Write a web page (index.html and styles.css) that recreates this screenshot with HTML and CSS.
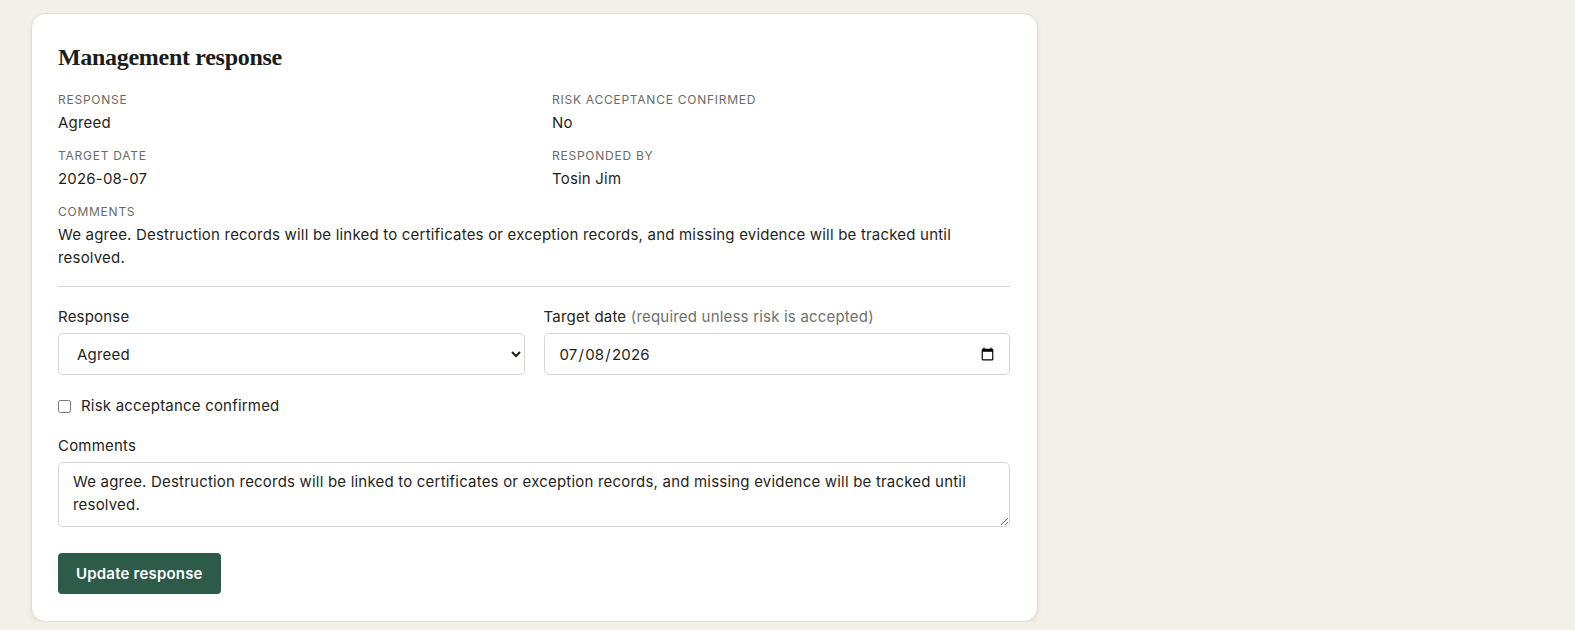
FILE: index.html
```html
<!DOCTYPE html>
<html lang="en">

<head>
    <meta charset="UTF-8">
    <meta name="viewport" content="width=device-width, initial-scale=1.0">
    <title>Management response</title>
    <link rel="stylesheet" href="styles.css">
</head>

<body>
    <div class="card">
        <h2>Management response</h2>

        <div class="details">
            <div class="item">
                <div class="label">Response</div>
                <div class="value">Agreed</div>
            </div>
            <div class="item">
                <div class="label">Risk acceptance confirmed</div>
                <div class="value">No</div>
            </div>
            <div class="item">
                <div class="label">Target date</div>
                <div class="value">2026-08-07</div>
            </div>
            <div class="item">
                <div class="label">Responded by</div>
                <div class="value">Tosin Jim</div>
            </div>
            <div class="item wide">
                <div class="label">Comments</div>
                <div class="value">We agree. Destruction records will be linked to certificates or exception records, and missing evidence will be tracked until resolved.</div>
            </div>
        </div>

        <hr>

        <form class="response-form">
            <div class="row">
                <div class="field">
                    <label for="response">Response</label>
                    <select id="response">
                        <option>Agreed</option>
                        <option>Partially agreed</option>
                        <option>Not agreed</option>
                    </select>
                </div>
                <div class="field">
                    <label for="targetDate">Target date <span class="hint">(required unless risk is accepted)</span></label>
                    <input type="date" id="targetDate" value="2026-07-08">
                </div>
            </div>

            <label class="check">
                <input type="checkbox" id="riskAccepted"> Risk acceptance confirmed
            </label>

            <div class="field">
                <label for="comments">Comments</label>
                <textarea id="comments" rows="2">We agree. Destruction records will be linked to certificates or exception records, and missing evidence will be tracked until resolved.</textarea>
            </div>

            <div class="actions">
                <button type="button" class="btn">Update response</button>
            </div>
        </form>
    </div>
</body>

</html>
```

FILE: styles.css
```css
body {
    margin: 0;
    background-color: #f3f0e9;
    font-family: Inter, "Noto Sans", sans-serif;
    font-size: 15px;
    letter-spacing: 0.2px;
    color: #1f1f1c;
}

.card {
    width: 952px;
    margin: 13px 0 0 31px;
    padding: 26px 27px 27px 26px;
    background-color: #ffffff;
    border: 1px solid #e2ddd2;
    border-radius: 14px;
    box-shadow: 0 2px 4px rgba(60, 50, 30, 0.08);
}

h2 {
    margin: 0 0 17px 0;
    font-family: "Liberation Serif", serif;
    font-size: 24px;
    line-height: 34px;
    font-weight: bold;
    letter-spacing: -0.3px;
    color: #1c1c1a;
}

.details {
    display: grid;
    grid-template-columns: 1fr 1fr;
    column-gap: 36px;
    row-gap: 13px;
}

.details .wide {
    grid-column: 1 / 3;
}

.label {
    font-size: 12px;
    letter-spacing: 0.75px;
    text-transform: uppercase;
    color: #6b6b66;
    line-height: 18px;
    margin-bottom: 2px;
}

.value {
    line-height: 23px;
}

hr {
    border: none;
    border-top: 1px solid #dcd7cb;
    margin: 17px 0 20px 0;
}

.response-form {
    display: flex;
    flex-direction: column;
    gap: 20px;
}

.row {
    display: grid;
    grid-template-columns: 1fr 1fr;
    column-gap: 19px;
    margin-bottom: 1px;
}

.field {
    display: flex;
    flex-direction: column;
    gap: 6px;
}

.field label {
    line-height: 20px;
    color: #252522;
}

.hint {
    color: #6e716c;
}

select,
input[type=date],
textarea {
    font-family: inherit;
    font-size: 15px;
    letter-spacing: inherit;
    color: #1f1f1c;
    background-color: #ffffff;
    border: 1px solid #d6d6d3;
    border-radius: 5px;
    box-sizing: border-box;
    width: 100%;
}

select,
input[type=date] {
    height: 42px;
    padding: 0 12px 0 14px;
}

textarea {
    height: 65px;
    padding: 7px 14px;
    line-height: 23px;
    resize: vertical;
}

.check {
    display: flex;
    align-items: center;
    gap: 10px;
    line-height: 20px;
    color: #252522;
}

.check input {
    margin: 0;
    width: 13px;
    height: 13px;
}

.actions {
    margin-top: 6px;
}

.btn {
    height: 41px;
    padding: 0 18px;
    background-color: #2e5a4a;
    color: #ffffff;
    border: none;
    border-radius: 4px;
    font-family: inherit;
    font-size: 15px;
    font-weight: 600;
    letter-spacing: 0.2px;
    cursor: pointer;
}
```
